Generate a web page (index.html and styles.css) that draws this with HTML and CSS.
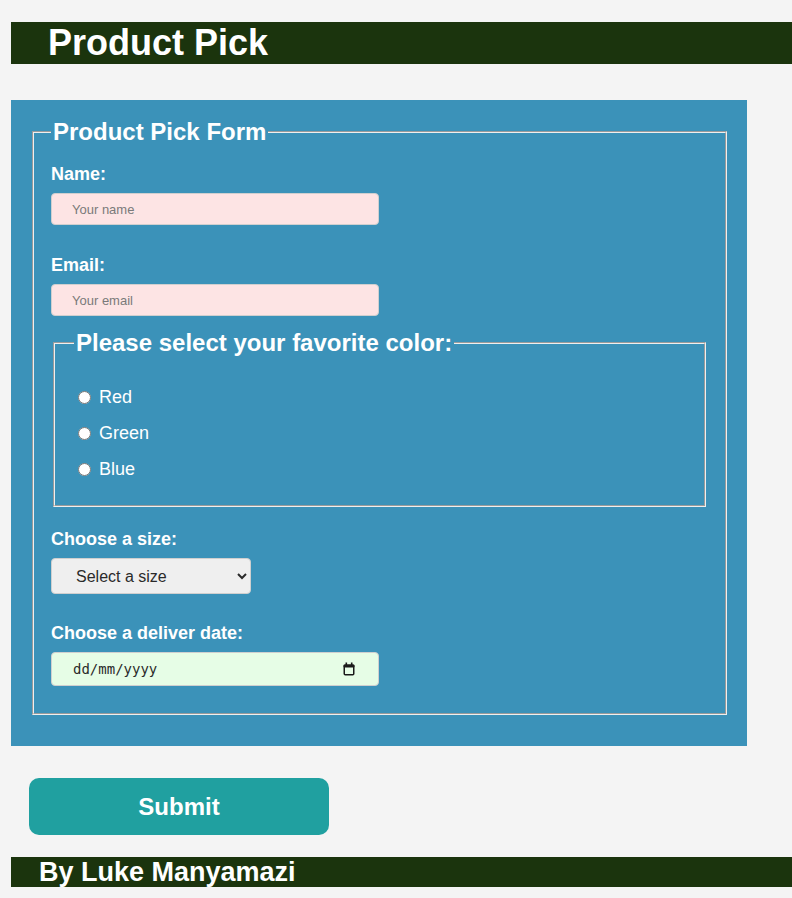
FILE: index.html
```html
<!DOCTYPE html>
<html lang="en-GB">
<head>
<meta charset="utf-8">
<title>Product Pick</title>
<link rel="stylesheet" href="styles.css">
</head>
<body>
<h1 class="header">Product Pick</h1>
<form class="card">
  <fieldset class="outer">
    <legend class="legend">Product Pick Form</legend>
    <label class="field first" for="name">Name:</label>
    <input class="text gap-lg" id="name" type="text" placeholder="Your name">
    <label class="field" for="email">Email:</label>
    <input class="text gap-sm" id="email" type="email" placeholder="Your email">
    <fieldset class="inner">
      <legend class="legend legend-inner">Please select your favorite color:</legend>
      <div class="options">
        <div class="option"><input class="radio" type="radio" name="color" id="red"><label for="red">Red</label></div>
        <div class="option"><input class="radio" type="radio" name="color" id="green"><label for="green">Green</label></div>
        <div class="option"><input class="radio" type="radio" name="color" id="blue"><label for="blue">Blue</label></div>
      </div>
    </fieldset>
    <label class="field" for="size">Choose a size:</label>
    <select class="select" id="size">
      <option>Select a size</option>
      <option>Small</option>
      <option>Medium</option>
      <option>Large</option>
    </select>
    <label class="field" for="date">Choose a deliver date:</label>
    <div class="date-wrap">
      <input class="date" id="date" type="text" placeholder="dd/mm/yyyy" inputmode="numeric">
      <svg class="cal-icon" width="12" height="14" viewBox="0 0 12 14" aria-hidden="true">
        <rect x="2.5" y="0.5" width="1.6" height="3" fill="#1a1a1a"/>
        <rect x="7.9" y="0.5" width="1.6" height="3" fill="#1a1a1a"/>
        <rect x="0.5" y="2.5" width="11" height="3" rx="1" fill="#1a1a1a"/>
        <rect x="1.25" y="3.25" width="9.5" height="9.5" rx="1" fill="none" stroke="#1a1a1a" stroke-width="1.5"/>
      </svg>
    </div>
  </fieldset>
</form>
<button class="submit" type="button">Submit</button>
<footer class="footer">By Luke Manyamazi</footer>
</body>
</html>
```

FILE: styles.css
```css
html, body {
  margin: 0;
  padding: 0;
}
body {
  background: #f4f4f4;
  padding: 22px 0 11px 11px;
  font-family: "Liberation Sans", Arial, sans-serif;
  overflow-x: hidden;
}
.header {
  margin: 0;
  background: #1b340d;
  color: #fff;
  font-size: 36px;
  font-weight: bold;
  line-height: 42px;
  padding-left: 37px;
}
.card {
  width: 736px;
  box-sizing: border-box;
  margin-top: 36px;
  background: #3b92b9;
  padding: 18px 20px 31px 21px;
}
.outer {
  margin: 0;
  padding: 0 17px 27px 17px;
}
.inner {
  margin: 0 2px 22px 2px;
  padding: 22px 17px 18px 17px;
}
.legend {
  color: #fff;
  font-size: 24px;
  font-weight: bold;
  padding: 0 2px;
}
.legend-inner {
  margin-left: 2px;
}
.field {
  display: block;
  color: #fff;
  font-size: 18px;
  font-weight: bold;
  line-height: 21px;
  margin-bottom: 8px;
}
.field.first {
  margin-top: 18px;
}
.text {
  display: block;
  box-sizing: border-box;
  width: 328px;
  height: 32px;
  margin: 0;
  padding: 0 20px;
  border: 1px solid #cfcfcf;
  border-radius: 4px;
  background: #fde4e4;
  font-family: "Liberation Sans", Arial, sans-serif;
  font-size: 13px;
  color: #333;
}
.text::placeholder {
  color: #7a7a7a;
}
.gap-lg {
  margin-bottom: 30px;
}
.gap-sm {
  margin-bottom: 13px;
}
.options {
  display: flex;
  flex-direction: column;
}
.option {
  display: flex;
  align-items: center;
  height: 36px;
  color: #fff;
  font-size: 18px;
}
.radio {
  width: 13px;
  height: 13px;
  margin: 0 8px 0 6px;
}
.select {
  display: block;
  box-sizing: border-box;
  width: 200px;
  height: 36px;
  margin: 0 0 29px 0;
  padding: 0 4px 0 20px;
  border: 1px solid #cfcfcf;
  border-radius: 4px;
  background-color: #efefef;
  color: #2a2a2a;
  font-family: "Liberation Sans", Arial, sans-serif;
  font-size: 16px;
}
.date-wrap {
  position: relative;
  width: 328px;
}
.date {
  display: block;
  box-sizing: border-box;
  width: 328px;
  height: 34px;
  margin: 0;
  padding: 0 44px 0 21px;
  border: 1px solid #cfcfcf;
  border-radius: 4px;
  background: #e6fde6;
  color: #222;
  font-family: "DejaVu Sans Mono", monospace;
  font-size: 14px;
}
.date::placeholder {
  color: #2a2a2a;
}
.cal-icon {
  position: absolute;
  right: 24px;
  top: 10px;
}
.submit {
  display: block;
  margin: 32px 0 0 18px;
  width: 300px;
  height: 57px;
  border: none;
  border-radius: 10px;
  background: #20a0a0;
  color: #fff;
  font-family: "Liberation Sans", Arial, sans-serif;
  font-size: 24px;
  font-weight: bold;
}
.footer {
  margin-top: 22px;
  background: #1b340d;
  color: #fff;
  font-size: 27px;
  font-weight: bold;
  line-height: 30px;
  padding-left: 28px;
}
```
